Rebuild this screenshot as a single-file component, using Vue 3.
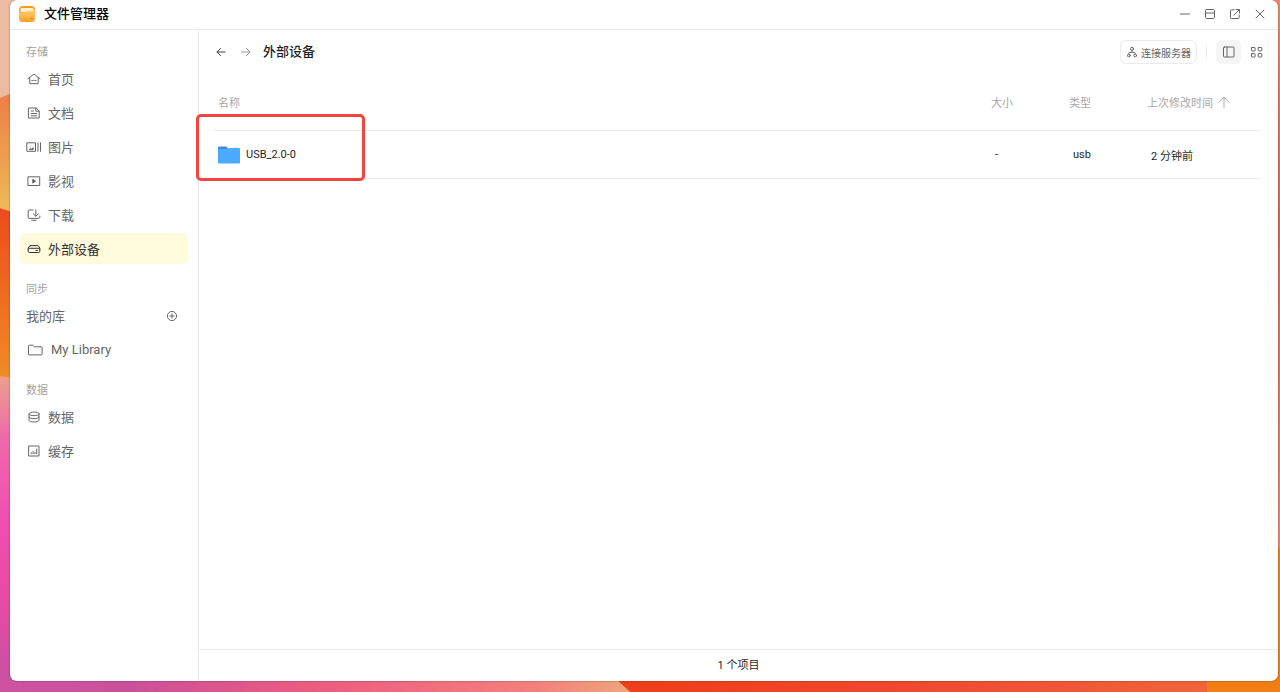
<script setup>
import { ref } from 'vue'

/**
 * File manager window: storage sidebar on the left, file table on the right.
 */
const active = ref('external')
const view = ref('list')

const storage = [
  { id: 'home', label: '首页' },
  { id: 'docs', label: '文档' },
  { id: 'pictures', label: '图片' },
  { id: 'videos', label: '影视' },
  { id: 'downloads', label: '下载' },
  { id: 'external', label: '外部设备' },
]

const dataItems = [
  { id: 'data', label: '数据' },
  { id: 'cache', label: '缓存' },
]

const icons = {
  home: 'M2 7.700 8 3l6 4.700M3.800 6.500v6.200h8.400V6.500M5.800 9.500h.6M7.700 9.500h.6M9.600 9.500h.6',
  docs: 'M2.800 3h7.400l3 3v7H2.800zM9.800 3v3.200H13M5.200 6h2.300M5.200 8.500h5.600M5.200 10.800h5.600',
  pictures: 'M1.200 3.800h8.300v8.500H1.200zM3.500 10.300l1.200-1 1 .7 1.500-1.300v1.600zM12 3.800v8.500M14.500 3.800v8.500',
  videos: 'M2.300 3.800h11.400v8.700H2.300z',
  downloads: 'M7 3H2.900q-.7 0-.7.700v7q0 .7.7.700h9.600q1.300 0 1.300-1V9M9.800 2.800v6M7.200 6.800l2.600 2.400 2.500-2.400M5.800 13.300h4.400',
  external: 'M4.500 4.600h7q1.400 0 2.300 2.700v3q0 1.200-1.200 1.200H3.400q-1.200 0-1.200-1.200v-3q.9-2.700 2.300-2.700zM2.200 8.200q0-.900 1.200-.9h9.200q1.200 0 1.200.9M10 9.500h1.500',
  data: 'M3 4.800c0-2.400 10-2.400 10 0s-10 2.400-10 0v6.400c0 2.400 10 2.400 10 0V4.800M3 8c0 2.400 10 2.400 10 0',
  cache: 'M3 3h10v10H3zM5.300 9.800v.9M7.100 8.500v2.200M8.900 9.300v1.400M10.700 6v4.700',
}

const files = [{ name: 'USB_2.0-0', size: '-', type: 'usb', modified: '2 分钟前' }]
</script>

<template>
  <div class="desktop">
    <svg class="wallpaper" viewBox="0 0 1280 692" preserveAspectRatio="none" aria-hidden="true">
      <defs>
        <linearGradient id="amber" x1="0" y1="0" x2="0" y2="1">
          <stop offset="0" stop-color="#ec7d45" />
          <stop offset="1" stop-color="#f0bb58" />
        </linearGradient>
        <linearGradient id="flame" x1="0" y1="0" x2="0" y2="1">
          <stop offset="0" stop-color="#ee4b1c" />
          <stop offset="1" stop-color="#f08c26" />
        </linearGradient>
        <linearGradient id="pink" x1="0" y1="0" x2="0" y2="1">
          <stop offset="0" stop-color="#eda08c" />
          <stop offset="0.2" stop-color="#ef68aa" />
          <stop offset="0.45" stop-color="#f04fb2" />
          <stop offset="0.65" stop-color="#ec4aa5" />
          <stop offset="1" stop-color="#c552a2" />
        </linearGradient>
        <linearGradient id="floor" x1="0" y1="0" x2="1" y2="0">
          <stop offset="0" stop-color="#cf52a2" />
          <stop offset="0.2" stop-color="#cb509a" />
          <stop offset="0.5" stop-color="#ec5c80" />
          <stop offset="0.85" stop-color="#f4807c" />
          <stop offset="1" stop-color="#eea57c" />
        </linearGradient>
        <linearGradient id="ember" x1="0" y1="0" x2="1" y2="0">
          <stop offset="0" stop-color="#f03c18" />
          <stop offset="0.5" stop-color="#ef4930" />
          <stop offset="1" stop-color="#f0643c" />
        </linearGradient>
        <linearGradient id="coral" x1="0" y1="0" x2="0" y2="1">
          <stop offset="0" stop-color="#f2826c" />
          <stop offset="0.4" stop-color="#dc6450" />
          <stop offset="1" stop-color="#e58a70" />
        </linearGradient>
      </defs>
      <rect width="640" height="110" fill="#edbba2" />
      <path d="M0 98 12 93V213L0 208z" fill="url(#amber)" />
      <path d="M0 208 12 212V380L0 377z" fill="url(#flame)" />
      <path d="M0 376 12 378V692H0z" fill="url(#pink)" />
      <path d="M0 680H617L630 692H0z" fill="url(#floor)" />
      <path d="M606 670H1207V692H630z" fill="url(#ember)" />
      <path d="M1260 0H1280V560H1260z" fill="url(#coral)" />
      <path d="M1207 670H1260V548H1280V692H1207z" fill="#f07e15" />
    </svg>

    <div class="window">
      <header class="titlebar">
        <svg class="app-icon" viewBox="0 0 18 18" aria-hidden="true">
          <defs>
            <linearGradient id="folder" x1="0" y1="0" x2="0" y2="1">
              <stop offset="0" stop-color="#ffcf70" />
              <stop offset="1" stop-color="#fba028" />
            </linearGradient>
          </defs>
          <rect x="1" y="1" width="16" height="16" rx="4" fill="#f79a1e" />
          <path d="M2.500 4.500Q2.500 3 4 3h10q1.500 0 1.500 1.500V7h-13z" fill="#fff3d6" />
          <path d="M1 7.500h6q1 0 1.500-1T10 5.500h7V13q0 4-4 4H5q-4 0-4-4z" fill="url(#folder)" />
          <path d="M12.500 13.500h2" stroke="#e08a1a" />
        </svg>
        <h1>文件管理器</h1>
        <div class="window-actions">
          <button type="button" aria-label="最小化">
            <svg viewBox="0 0 14 14"><path d="M2.500 7h9" /></svg>
          </button>
          <button type="button" aria-label="最大化">
            <svg viewBox="0 0 14 14"><rect x="2.500" y="2.500" width="9" height="9" rx="1" /><path d="M2.500 6h9" /></svg>
          </button>
          <button type="button" aria-label="新窗口打开">
            <svg viewBox="0 0 14 14"><path d="M6 2.800H3.300q-.8 0-.8.800v7.100q0 .8.8.8h7.100q.8 0 .8-.8V8M8 2.500h3.500V6M11.300 2.700 5.800 8.200" /></svg>
          </button>
          <button type="button" aria-label="关闭">
            <svg viewBox="0 0 14 14"><path d="m3 3 8 8M11 3l-8 8" /></svg>
          </button>
        </div>
      </header>

      <div class="body">
        <aside class="sidebar">
          <h2>存储</h2>
          <nav>
            <a
              v-for="item in storage"
              :key="item.id"
              href="#"
              class="nav-item"
              :class="{ active: active === item.id }"
              @click.prevent="active = item.id"
            >
              <svg class="nav-icon" viewBox="0 0 16 16" aria-hidden="true">
                <path :d="icons[item.id]" />
                <path v-if="item.id === 'videos'" class="solid" d="m7 6.500 2.500 1.650L7 9.800z" />
              </svg>
              <span>{{ item.label }}</span>
            </a>
          </nav>

          <h2>同步</h2>
          <nav>
            <div class="nav-item">
              <span>我的库</span>
              <button type="button" class="add" aria-label="新建库">
                <svg viewBox="0 0 12 12"><circle cx="6" cy="6" r="4.600" /><path d="M6 3.800v4.400M3.800 6h4.400" /></svg>
              </button>
            </div>
            <a href="#" class="nav-item library" @click.prevent>
              <svg class="library-icon" viewBox="0 0 18 16" aria-hidden="true">
                <path d="M2.500 12V4q0-.8.800-.8h3.500l1.700 1.600h6.700q.9 0 .9.900V12q0 .9-.9.900H3.300q-.8 0-.8-.9z" />
              </svg>
              <span>My Library</span>
            </a>
          </nav>

          <h2>数据</h2>
          <nav>
            <a
              v-for="item in dataItems"
              :key="item.id"
              href="#"
              class="nav-item"
              :class="{ active: active === item.id }"
              @click.prevent="active = item.id"
            >
              <svg class="nav-icon" viewBox="0 0 16 16" aria-hidden="true"><path :d="icons[item.id]" /></svg>
              <span>{{ item.label }}</span>
            </a>
          </nav>
        </aside>

        <main class="content">
          <div class="toolbar">
            <button type="button" class="arrow" aria-label="后退">
              <svg viewBox="0 0 14 14"><path d="M11 7H3M6.500 3.500 3 7l3.500 3.500" /></svg>
            </button>
            <button type="button" class="arrow" aria-label="前进" disabled>
              <svg viewBox="0 0 14 14"><path d="M2.500 7H11M7.500 3.500 11 7l-3.500 3.500" /></svg>
            </button>
            <h2>外部设备</h2>
            <div class="tools">
              <button type="button" class="connect">
                <svg viewBox="0 0 12 12" aria-hidden="true">
                  <circle cx="6" cy="2.800" r="1.500" />
                  <circle cx="2.800" cy="9.500" r="1.400" />
                  <circle cx="9.200" cy="9.500" r="1.400" />
                  <path d="M6 4.300v2M2.800 8.100V7.300q0-.9.900-.9h4.600q.9 0 .9.900v.8" />
                </svg>
                <span>连接服务器</span>
              </button>
              <span class="divider"></span>
              <button
                type="button"
                class="view"
                :class="{ on: view === 'list' }"
                aria-label="列表视图"
                @click="view = 'list'"
              >
                <svg viewBox="0 0 14 14"><rect x="1.500" y="2" width="10.500" height="10" rx="0.800" /><path d="M5 2v10" /></svg>
              </button>
              <button
                type="button"
                class="view"
                :class="{ on: view === 'grid' }"
                aria-label="网格视图"
                @click="view = 'grid'"
              >
                <svg viewBox="0 0 14 14">
                  <rect x="1.500" y="2.500" width="3.600" height="3.400" rx="0.500" />
                  <rect x="8.200" y="2.500" width="3.600" height="3.400" rx="0.500" />
                  <rect x="1.500" y="8.600" width="3.600" height="3.400" rx="0.500" />
                  <rect x="8.200" y="8.600" width="3.600" height="3.400" rx="0.500" />
                </svg>
              </button>
            </div>
          </div>

          <div class="listing">
            <table>
              <thead>
                <tr>
                  <th>名称</th>
                  <th class="size">大小</th>
                  <th class="type">类型</th>
                  <th class="modified">
                    <span class="sort">
                      上次修改时间
                      <svg viewBox="0 0 12 12" aria-hidden="true"><path d="M6 11.500v-10M1 6.200l5-5 5 5" /></svg>
                    </span>
                  </th>
                </tr>
              </thead>
              <tbody>
                <tr v-for="file in files" :key="file.name">
                  <td>
                    <span class="file">
                      <svg viewBox="0 0 22 18" aria-hidden="true">
                        <path d="M0 1.500Q0 .500 1 .500h7.500l1.500 2V6H0z" fill="#3b8de8" />
                        <path d="M0 3h9.500l1-1H21q1 0 1 1v13.500q0 1-1 1H1q-1 0-1-1z" fill="#4dabff" />
                      </svg>
                      {{ file.name }}
                    </span>
                  </td>
                  <td>{{ file.size }}</td>
                  <td>{{ file.type }}</td>
                  <td>{{ file.modified }}</td>
                </tr>
              </tbody>
            </table>
            <div class="highlight"></div>
          </div>

          <footer>{{ files.length }} 个项目</footer>
        </main>
      </div>
    </div>
  </div>
</template>

<style>
body {
  margin: 0;
}
</style>

<style scoped>
.desktop {
  position: relative;
  box-sizing: border-box;
  height: 100vh;
  padding: 0 2px 11px 10px;
  overflow: hidden;
  font-family: Roboto, "Noto Sans CJK SC", sans-serif;
  font-size: 11px;
  color: #1f1f1f;
}
.window {
  position: relative;
  display: flex;
  flex-direction: column;
  height: 100%;
  border-radius: 7px;
  background: #fff;
  box-shadow: 0 0 2px rgba(0, 0, 0, 0.4);
}
h1,
h2 {
  margin: 0;
}
svg {
  fill: none;
  stroke: currentColor;
  stroke-linecap: round;
  stroke-linejoin: round;
}
.wallpaper {
  position: absolute;
  inset: 0;
  width: 100%;
  height: 100%;
  stroke: none;
}
button {
  display: flex;
  align-items: center;
  justify-content: center;
  padding: 0;
  border: 0;
  background: none;
  color: #666;
  font: inherit;
  cursor: pointer;
}

.titlebar {
  display: flex;
  align-items: center;
  box-sizing: border-box;
  flex: none;
  height: 30px;
  padding: 0 6px 1px 8px;
  border-bottom: 1px solid #ebebeb;
}
.app-icon {
  width: 18px;
  height: 18px;
  stroke: none;
}
.titlebar h1 {
  margin-left: 8px;
  font-size: 13px;
  font-weight: 500;
  line-height: 20px;
  color: #000;
}
.window-actions {
  display: flex;
  margin-left: auto;
}
.window-actions button {
  width: 25px;
  height: 24px;
}
.window-actions svg,
.arrow svg,
.view svg {
  width: 14px;
  height: 14px;
}

.body {
  display: flex;
  flex: 1;
  min-height: 0;
}
.sidebar {
  box-sizing: border-box;
  flex: none;
  width: 189px;
  padding: 15px 10px;
  border-right: 1px solid #ebebeb;
}
.sidebar h2 {
  margin-bottom: 2px;
  padding-left: 6px;
  font-size: 11px;
  font-weight: 400;
  line-height: 16px;
  color: #a3a3a3;
}
.sidebar nav {
  display: flex;
  flex-direction: column;
  gap: 3px;
  margin-bottom: 18px;
}
.nav-item {
  display: flex;
  align-items: center;
  gap: 6px;
  height: 31px;
  padding: 0 10px 0 6px;
  border-radius: 6px;
  font-size: 13px;
  color: #666;
  text-decoration: none;
}
.nav-item.active {
  background: #fffbdd;
  color: #333;
}
.nav-icon {
  width: 16px;
  height: 16px;
}
.nav-icon .solid {
  fill: currentColor;
}
.library {
  gap: 7px;
}
.library-icon {
  width: 18px;
  height: 16px;
}
.add {
  margin-left: auto;
}
.add svg {
  width: 12px;
  height: 12px;
}

.content {
  display: flex;
  flex: 1;
  flex-direction: column;
  min-width: 0;
}
.toolbar {
  display: flex;
  align-items: center;
  box-sizing: border-box;
  flex: none;
  height: 45px;
  padding: 0 9px 1px;
}
.arrow {
  width: 25px;
  height: 24px;
  color: #444;
}
.arrow:disabled {
  color: #999;
}
.toolbar h2 {
  margin-left: 5px;
  font-size: 13px;
  font-weight: 500;
  line-height: 20px;
}
.tools {
  display: flex;
  align-items: center;
  margin-left: auto;
}
.connect {
  gap: 3px;
  height: 24px;
  padding: 0 5px;
  border: 1px solid #ebebeb;
  border-radius: 6px;
  font-size: 10px;
}
.connect svg {
  width: 12px;
  height: 12px;
}
.divider {
  width: 1px;
  height: 16px;
  margin: 0 9px;
  background: #ebebeb;
}
.view {
  width: 25px;
  height: 24px;
  border-radius: 5px;
}
.view + .view {
  margin-left: 3px;
}
.view.on {
  background: #f5f5f5;
}

.listing {
  position: relative;
  flex: 1;
  min-height: 0;
  padding: 0 18px 0 15px;
}
table {
  width: 100%;
  table-layout: fixed;
  border-spacing: 0;
}
th,
td {
  box-sizing: border-box;
  padding: 0 0 0 4px;
  border-bottom: 1px solid #ebebeb;
  text-align: left;
  white-space: nowrap;
}
th {
  height: 56px;
  padding-bottom: 2px;
  font-weight: 400;
  color: #a8a8a8;
}
td {
  height: 48px;
}
td + td {
  padding-left: 8px;
}
.size,
.type {
  width: 78px;
}
.modified {
  width: 117px;
}
.sort {
  display: flex;
  align-items: center;
  gap: 5px;
}
.sort svg {
  width: 12px;
  height: 12px;
}
.file {
  display: flex;
  align-items: center;
  gap: 6px;
}
.file svg {
  width: 22px;
  height: 18px;
  stroke: none;
}
/* red frame that calls out the connected device */
.highlight {
  position: absolute;
  top: 39px;
  left: -3px;
  box-sizing: border-box;
  width: 169px;
  height: 67px;
  border: 3px solid #f24440;
  border-radius: 5px;
  pointer-events: none;
}
footer {
  flex: none;
  height: 31px;
  border-top: 1px solid #ebebeb;
  line-height: 32px;
  text-align: center;
}
</style>
